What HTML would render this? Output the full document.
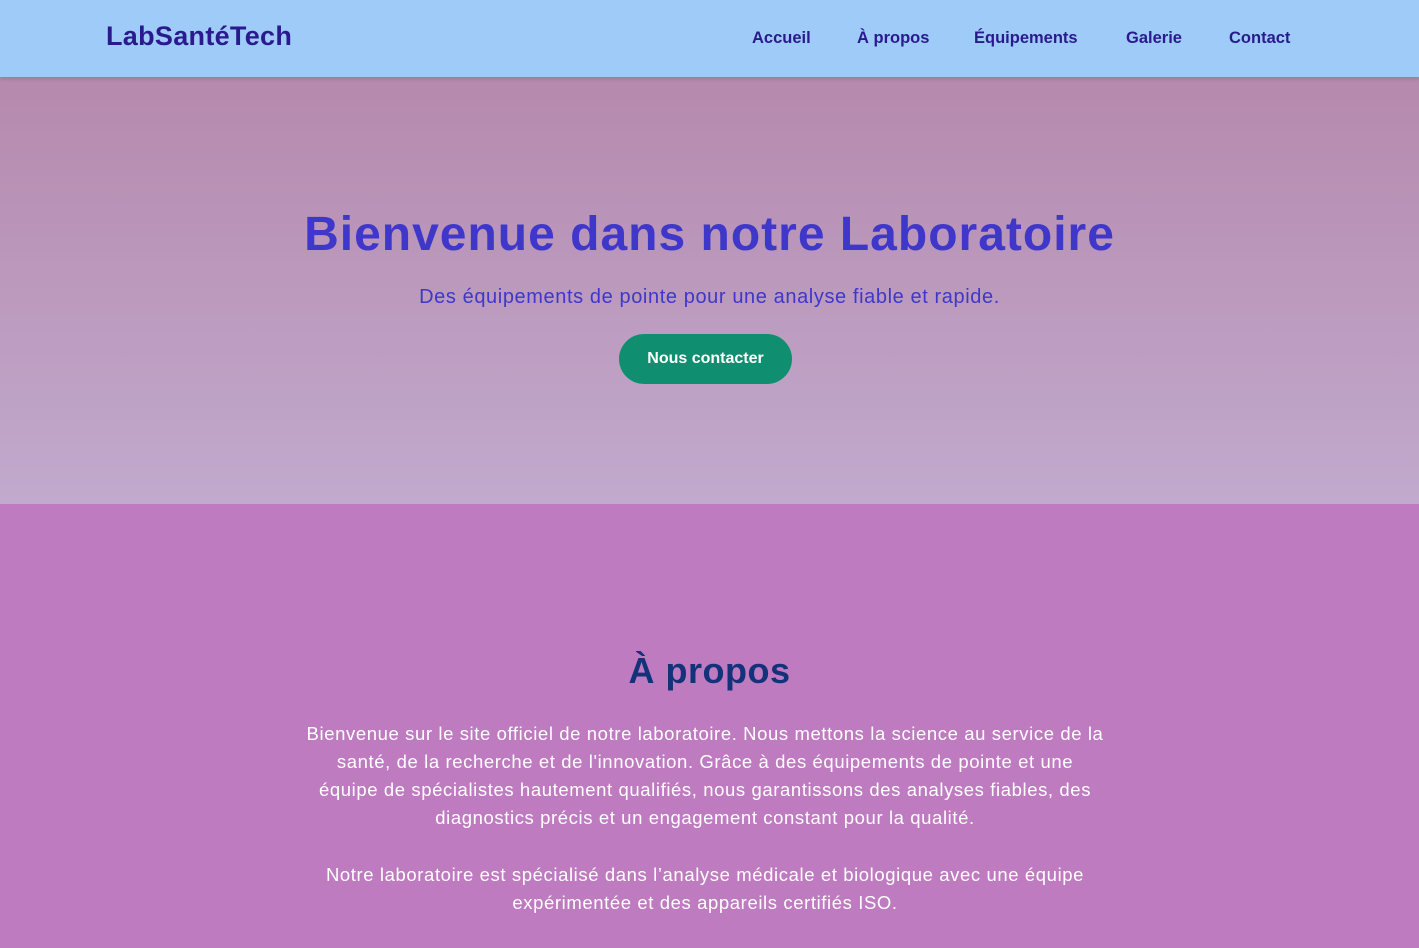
<!DOCTYPE html>
<html><head><meta charset="utf-8"><style>
*{margin:0;padding:0;box-sizing:border-box}
body{width:1419px;height:948px;overflow:hidden;font-family:"Liberation Sans",sans-serif;background:#be7bc0}
header{position:absolute;top:0;left:0;width:1419px;height:77px;background:#9ecbf8;box-shadow:0 2px 4px rgba(0,0,0,.12);z-index:2}
.logo{position:absolute;left:106px;top:21px;font-size:27px;font-weight:bold;color:#2a1a8e;letter-spacing:.3px}
nav a{position:absolute;top:29px;font-size:16.5px;font-weight:bold;color:#2a1a8e;text-decoration:none}
.hero{position:absolute;top:77px;left:0;width:1419px;height:427px;background:linear-gradient(#b689ae,#c1aacd);text-align:center}
h1{position:absolute;top:130px;width:100%;font-size:48px;color:#3f37c9;font-weight:bold;letter-spacing:1px}
.sub{position:absolute;top:209px;width:100%;font-size:20px;color:#3f37c9;letter-spacing:.6px}
.btn{position:absolute;left:619px;top:257px;width:173px;height:50px;border-radius:25px;background:#0f8f6f;color:#fff;font-weight:bold;font-size:16px;line-height:50px}
.about{position:absolute;top:504px;width:1419px;text-align:center}
h2{position:absolute;top:146px;width:100%;font-size:36px;color:#13327a;font-weight:bold;letter-spacing:.5px}
.p{position:absolute;left:200px;width:1010px;color:#fff;font-size:18.5px;line-height:28px;letter-spacing:.6px}
</style></head><body>
<header><div class="logo">LabSantéTech</div>
<nav><a style="left:752px">Accueil</a><a style="left:857px">À propos</a><a style="left:974px">Équipements</a><a style="left:1126px">Galerie</a><a style="left:1229px">Contact</a></nav></header>
<div class="hero"><h1>Bienvenue dans notre Laboratoire</h1>
<div class="sub">Des équipements de pointe pour une analyse fiable et rapide.</div>
<div class="btn">Nous contacter</div></div>
<div class="about"><h2>À propos</h2>
<div class="p" style="top:216px">Bienvenue sur le site officiel de notre laboratoire. Nous mettons la science au service de la<br>santé, de la recherche et de l'innovation. Grâce à des équipements de pointe et une<br>équipe de spécialistes hautement qualifiés, nous garantissons des analyses fiables, des<br>diagnostics précis et un engagement constant pour la qualité.</div>
<div class="p" style="top:357px">Notre laboratoire est spécialisé dans l’analyse médicale et biologique avec une équipe<br>expérimentée et des appareils certifiés ISO.</div></div>
</body></html>
